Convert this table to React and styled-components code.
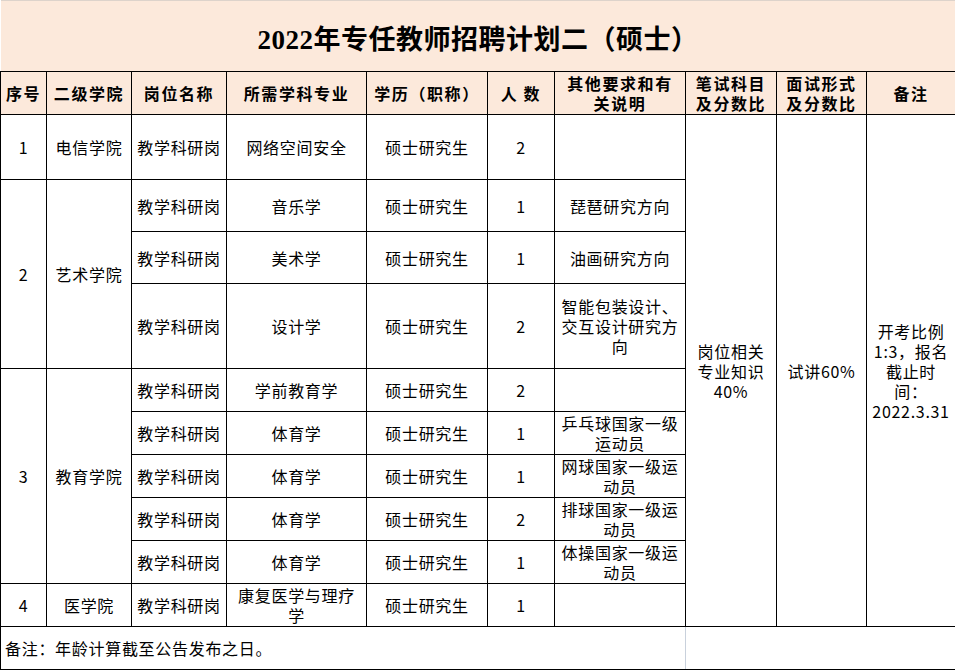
import React from 'react';
import styled, { createGlobalStyle } from 'styled-components';

const GlobalStyle = createGlobalStyle`
  html, body {
    margin: 0;
    padding: 0;
    background: #ffffff;
  }
`;

const peach = '#fce9db';
const cjk = '"Noto Sans CJK SC", "Noto Sans", sans-serif';

const Sheet = styled.table`
  width: 955px;
  border-collapse: collapse;
  table-layout: fixed;
  font-family: ${cjk};
  font-size: 16px;
  color: #000;
`;

const Row = styled.tr`
  height: ${(p) => p.h}px;
`;

const TitleCell = styled.td`
  background: ${peach};
  border-top: 1px solid #ddd3cb;
  text-align: center;
  vertical-align: middle;
  font-family: "Liberation Serif", "Noto Sans CJK SC", serif;
  font-size: 27px;
  font-weight: 700;
  letter-spacing: 0.5px;
  padding: 2px 0 0 0;
`;

const HeadCell = styled.th`
  background: ${peach};
  border: 1px solid #000;
  font-weight: 700;
  font-size: 16px;
  line-height: 20px;
  letter-spacing: 1.6px;
  text-align: center;
  vertical-align: middle;
  padding: 0;
  white-space: nowrap;
`;

const Cell = styled.td`
  border: 1px solid #000;
  text-align: center;
  vertical-align: middle;
  line-height: 20px;
  letter-spacing: 0.7px;
  padding: 0 2px;
  white-space: nowrap;
`;

const NoteCell = styled.td`
  border-top: 1px solid #000;
  border-bottom: 1px solid #000;
  border-left: 1px solid #000;
  border-right: ${(p) => (p.grid ? '1px solid #c9d1dc' : 'none')};
  text-align: left;
  vertical-align: middle;
  letter-spacing: 0.7px;
  padding: 0 0 0 4px;
  white-space: nowrap;
`;

const BlankNote = styled.td`
  border-top: 1px solid #000;
  border-bottom: 1px solid #000;
  border-right: 1px solid #000;
`;

const widths = [46, 85, 95, 140, 121, 67, 131, 91, 90, 89];

const Lines = ({ text }) =>
  text.split('/').map((line, i, all) => (
    <React.Fragment key={i}>
      {line}
      {i < all.length - 1 && <br />}
    </React.Fragment>
  ));

const post = '教学科研岗';
const edu = '硕士研究生';

const App = () => (
  <>
    <GlobalStyle />
    <Sheet>
      <colgroup>
        {widths.map((w, i) => (
          <col key={i} style={{ width: w }} />
        ))}
      </colgroup>
      <tbody>
        <Row h={71}>
          <TitleCell colSpan={10}>2022年专任教师招聘计划二（硕士）</TitleCell>
        </Row>
        <Row h={43}>
          <HeadCell>序号</HeadCell>
          <HeadCell>二级学院</HeadCell>
          <HeadCell>岗位名称</HeadCell>
          <HeadCell>所需学科专业</HeadCell>
          <HeadCell>学历（职称）</HeadCell>
          <HeadCell>人 数</HeadCell>
          <HeadCell><Lines text="其他要求和有/关说明" /></HeadCell>
          <HeadCell><Lines text="笔试科目/及分数比" /></HeadCell>
          <HeadCell><Lines text="面试形式/及分数比" /></HeadCell>
          <HeadCell>备注</HeadCell>
        </Row>

        <Row h={65}>
          <Cell>1</Cell>
          <Cell>电信学院</Cell>
          <Cell>{post}</Cell>
          <Cell>网络空间安全</Cell>
          <Cell>{edu}</Cell>
          <Cell>2</Cell>
          <Cell></Cell>
          <Cell rowSpan={10}><Lines text="岗位相关/专业知识/40%" /></Cell>
          <Cell rowSpan={10}>试讲60%</Cell>
          <Cell rowSpan={10}>
            <Lines text="开考比例/1:3，报名/截止时/间：/2022.3.31" />
          </Cell>
        </Row>

        <Row h={52}>
          <Cell rowSpan={3}>2</Cell>
          <Cell rowSpan={3}>艺术学院</Cell>
          <Cell>{post}</Cell>
          <Cell>音乐学</Cell>
          <Cell>{edu}</Cell>
          <Cell>1</Cell>
          <Cell>琵琶研究方向</Cell>
        </Row>
        <Row h={52}>
          <Cell>{post}</Cell>
          <Cell>美术学</Cell>
          <Cell>{edu}</Cell>
          <Cell>1</Cell>
          <Cell>油画研究方向</Cell>
        </Row>
        <Row h={85}>
          <Cell>{post}</Cell>
          <Cell>设计学</Cell>
          <Cell>{edu}</Cell>
          <Cell>2</Cell>
          <Cell><Lines text="智能包装设计、/交互设计研究方/向" /></Cell>
        </Row>

        <Row h={43}>
          <Cell rowSpan={5}>3</Cell>
          <Cell rowSpan={5}>教育学院</Cell>
          <Cell>{post}</Cell>
          <Cell>学前教育学</Cell>
          <Cell>{edu}</Cell>
          <Cell>2</Cell>
          <Cell></Cell>
        </Row>
        <Row h={43}>
          <Cell>{post}</Cell>
          <Cell>体育学</Cell>
          <Cell>{edu}</Cell>
          <Cell>1</Cell>
          <Cell><Lines text="乒乓球国家一级/运动员" /></Cell>
        </Row>
        <Row h={43}>
          <Cell>{post}</Cell>
          <Cell>体育学</Cell>
          <Cell>{edu}</Cell>
          <Cell>1</Cell>
          <Cell><Lines text="网球国家一级运/动员" /></Cell>
        </Row>
        <Row h={43}>
          <Cell>{post}</Cell>
          <Cell>体育学</Cell>
          <Cell>{edu}</Cell>
          <Cell>2</Cell>
          <Cell><Lines text="排球国家一级运/动员" /></Cell>
        </Row>
        <Row h={43}>
          <Cell>{post}</Cell>
          <Cell>体育学</Cell>
          <Cell>{edu}</Cell>
          <Cell>1</Cell>
          <Cell><Lines text="体操国家一级运/动员" /></Cell>
        </Row>

        <Row h={43}>
          <Cell>4</Cell>
          <Cell>医学院</Cell>
          <Cell>{post}</Cell>
          <Cell><Lines text="康复医学与理疗/学" /></Cell>
          <Cell>{edu}</Cell>
          <Cell>1</Cell>
          <Cell></Cell>
        </Row>

        <Row h={43}>
          <NoteCell colSpan={7} grid>备注：年龄计算截至公告发布之日。</NoteCell>
          <BlankNote colSpan={3} />
        </Row>
      </tbody>
    </Sheet>
  </>
);

export default App;
